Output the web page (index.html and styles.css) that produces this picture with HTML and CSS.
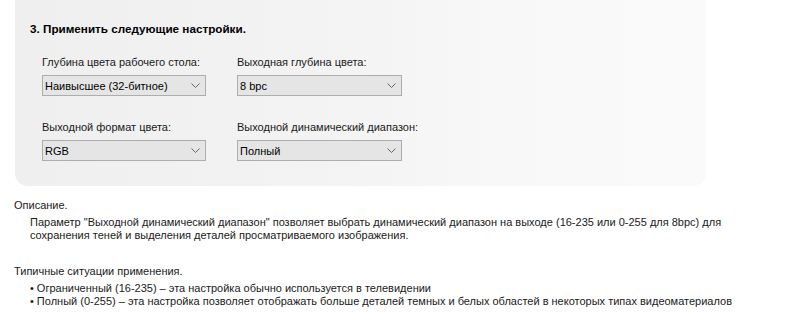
FILE: index.html
```html
<!DOCTYPE html>
<html lang="ru">
<head>
<meta charset="utf-8">
<link rel="stylesheet" href="styles.css">
</head>
<body>
<div class="panel">
  <div class="heading">3. Применить следующие настройки.</div>
  <div class="grid">
    <div class="field">
      <div class="label">Глубина цвета рабочего стола:</div>
      <div class="select"><span>Наивысшее (32-битное)</span><svg class="chev" width="9" height="5" viewBox="0 0 9 5"><path d="M0.5 0.5 L4.5 4.5 L8.5 0.5" fill="none" stroke="#666" stroke-width="1"/></svg></div>
    </div>
    <div class="field">
      <div class="label">Выходная глубина цвета:</div>
      <div class="select"><span>8 bpc</span><svg class="chev" width="9" height="5" viewBox="0 0 9 5"><path d="M0.5 0.5 L4.5 4.5 L8.5 0.5" fill="none" stroke="#666" stroke-width="1"/></svg></div>
    </div>
    <div class="field">
      <div class="label">Выходной формат цвета:</div>
      <div class="select"><span>RGB</span><svg class="chev" width="9" height="5" viewBox="0 0 9 5"><path d="M0.5 0.5 L4.5 4.5 L8.5 0.5" fill="none" stroke="#666" stroke-width="1"/></svg></div>
    </div>
    <div class="field">
      <div class="label">Выходной динамический диапазон:</div>
      <div class="select"><span>Полный</span><svg class="chev" width="9" height="5" viewBox="0 0 9 5"><path d="M0.5 0.5 L4.5 4.5 L8.5 0.5" fill="none" stroke="#666" stroke-width="1"/></svg></div>
    </div>
  </div>
</div>
<div class="desc">
  <div class="title">Описание.</div>
  <p class="indent">Параметр "Выходной динамический диапазон" позволяет выбрать динамический диапазон на выходе (16-235 или 0-255 для 8bpc) для<br>сохранения теней и выделения деталей просматриваемого изображения.</p>
  <div class="title usage">Типичные ситуации применения.</div>
  <ul class="bullets">
    <li>Ограниченный (16-235) – эта настройка обычно используется в телевидении</li>
    <li>Полный (0-255) – эта настройка позволяет отображать больше деталей темных и белых областей в некоторых типах видеоматериалов</li>
  </ul>
</div>
</body>
</html>
```

FILE: styles.css
```css
html, body {
  margin: 0;
  padding: 0;
  background: #ffffff;
}
body {
  font-family: "Liberation Sans", Arial, sans-serif;
  font-size: 11px;
  color: #1a1a1a;
  width: 787px;
  height: 335px;
  overflow: hidden;
  white-space: nowrap;
}
.panel {
  margin-left: 15px;
  width: 691px;
  height: 186px;
  box-sizing: border-box;
  padding: 21px 0 0 15px;
  border-radius: 0 0 13px 13px;
  background: linear-gradient(to right, #efefef 0%, #f3f3f3 45%, #f8f8f8 70%, #fafafa 100%);
}
.heading {
  font-weight: bold;
  font-size: 11.7px;
  line-height: 16px;
  color: #000;
}
.grid {
  display: grid;
  grid-template-columns: 164px 165px;
  column-gap: 31px;
  row-gap: 23px;
  margin: 17px 0 0 12px;
}
.label {
  line-height: 16px;
  margin-bottom: 5px;
}
.select {
  height: 21px;
  box-sizing: border-box;
  border: 1px solid #adadad;
  background: #e5e5e5;
  display: flex;
  align-items: center;
  justify-content: space-between;
  padding: 0 5px 0 2px;
  color: #000;
}
.chev {
  display: block;
}
.desc {
  padding: 13px 0 0 14px;
  line-height: 13px;
}
.indent {
  margin: 4px 0 0 16px;
}
.usage {
  margin-top: 23px;
}
.bullets {
  list-style: none;
  margin: 4px 0 0 16px;
  padding: 0;
}
.bullets li::before {
  content: "•";
  margin-right: 3px;
}
```
